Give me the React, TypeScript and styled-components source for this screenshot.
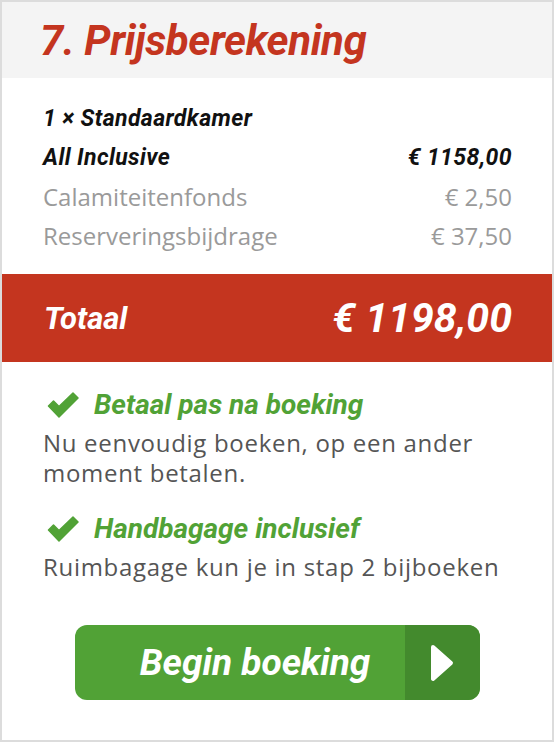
import styled, { createGlobalStyle } from "styled-components";

const Global = createGlobalStyle`
  html, body {
    margin: 0;
    padding: 0;
    background: #fff;
  }
  * {
    box-sizing: border-box;
  }
`;

const red = "#c4351f";
const green = "#51a236";

const Card = styled.div`
  width: 554px;
  height: 742px;
  border: 2px solid #dcdcdc;
  display: flex;
  flex-direction: column;
  background: #fff;
`;

const Header = styled.div`
  height: 76px;
  background: #f4f4f4;
  display: flex;
  align-items: center;
  padding-left: 38px;
`;

const Title = styled.h1`
  margin: 0;
  font-family: Roboto, "Liberation Sans", sans-serif;
  font-style: italic;
  font-weight: 700;
  font-size: 42px;
  letter-spacing: -0.4px;
  color: ${red};
`;

const Lines = styled.div`
  padding: 21px 40px 19px 41px;
  display: flex;
  flex-direction: column;
`;

const Line = styled.div<{ $muted?: boolean }>`
  height: 39px;
  line-height: 39px;
  display: flex;
  justify-content: space-between;
  font-family: ${(p) =>
    p.$muted
      ? `"Open Sans", "Liberation Sans", sans-serif`
      : `Roboto, "Liberation Sans", sans-serif`};
  font-style: ${(p) => (p.$muted ? "normal" : "italic")};
  font-weight: ${(p) => (p.$muted ? 400 : 700)};
  font-size: ${(p) => (p.$muted ? "24px" : "23px")};
  letter-spacing: ${(p) => (p.$muted ? "0" : "0.4px")};
  color: ${(p) => (p.$muted ? "#9a9a9a" : "#111")};
`;

const Total = styled.div`
  height: 88px;
  background: ${red};
  color: #fff;
  display: flex;
  align-items: center;
  justify-content: space-between;
  padding: 0 40px 0 42px;
  font-family: Roboto, "Liberation Sans", sans-serif;
  font-style: italic;
  font-weight: 700;
`;

const TotalLabel = styled.span`
  font-size: 31px;
`;

const TotalValue = styled.span`
  font-size: 41px;
`;

const Perks = styled.div`
  padding: 25px 40px 0 41px;
  display: flex;
  flex-direction: column;
  gap: 23px;
`;

const Perk = styled.div`
  display: flex;
  flex-direction: column;
  gap: 5px;
`;

const PerkTitle = styled.div`
  display: flex;
  align-items: center;
  gap: 14px;
  height: 36px;
  line-height: 36px;
  padding-left: 4px;
  font-family: Roboto, "Liberation Sans", sans-serif;
  font-style: italic;
  font-weight: 700;
  font-size: 28px;
  color: ${green};
`;

const PerkText = styled.p`
  margin: 0;
  font-family: "Open Sans", "Liberation Sans", sans-serif;
  font-size: 24px;
  letter-spacing: 0.7px;
  line-height: 30px;
  color: #555;
`;

const ButtonRow = styled.div`
  display: flex;
  justify-content: center;
  margin-top: 43px;
`;

const Button = styled.button`
  width: 405px;
  height: 75px;
  border: 0;
  padding: 0;
  border-radius: 12px;
  overflow: hidden;
  display: flex;
  background: ${green};
  cursor: pointer;
`;

const ButtonLabel = styled.span`
  flex: 1;
  display: flex;
  align-items: center;
  justify-content: center;
  padding-left: 31px;
  font-family: Roboto, "Liberation Sans", sans-serif;
  font-style: italic;
  font-weight: 700;
  font-size: 37px;
  color: #fff;
`;

const ButtonArrow = styled.span`
  width: 75px;
  background: #438a2d;
  display: flex;
  align-items: center;
  justify-content: center;
`;

const Check = () => (
  <svg width="33" height="26" viewBox="0 0 33 26">
    <path
      d="M1.5 14 L6.5 9 L12 14.5 L26 1 L31 6 L12 25 Z"
      fill={green}
      stroke={green}
      strokeWidth="1.5"
      strokeLinejoin="round"
    />
  </svg>
);

const Arrow = () => (
  <svg width="24" height="38" viewBox="0 0 24 38">
    <path
      d="M3 3 L21 19 L3 35 Z"
      fill="#fff"
      stroke="#fff"
      strokeWidth="4"
      strokeLinejoin="round"
    />
  </svg>
);

export default function App() {
  return (
    <>
      <Global />
      <Card>
        <Header>
          <Title>7. Prijsberekening</Title>
        </Header>
        <Lines>
          <Line>
            <span>1 × Standaardkamer</span>
          </Line>
          <Line>
            <span>All Inclusive</span>
            <span>€ 1158,00</span>
          </Line>
          <Line $muted>
            <span>Calamiteitenfonds</span>
            <span>€ 2,50</span>
          </Line>
          <Line $muted>
            <span>Reserveringsbijdrage</span>
            <span>€ 37,50</span>
          </Line>
        </Lines>
        <Total>
          <TotalLabel>Totaal</TotalLabel>
          <TotalValue>€ 1198,00</TotalValue>
        </Total>
        <Perks>
          <Perk>
            <PerkTitle>
              <Check />
              Betaal pas na boeking
            </PerkTitle>
            <PerkText>
              Nu eenvoudig boeken, op een ander
              <br />
              moment betalen.
            </PerkText>
          </Perk>
          <Perk>
            <PerkTitle>
              <Check />
              Handbagage inclusief
            </PerkTitle>
            <PerkText>Ruimbagage kun je in stap 2 bijboeken</PerkText>
          </Perk>
        </Perks>
        <ButtonRow>
          <Button>
            <ButtonLabel>Begin boeking</ButtonLabel>
            <ButtonArrow>
              <Arrow />
            </ButtonArrow>
          </Button>
        </ButtonRow>
      </Card>
    </>
  );
}
